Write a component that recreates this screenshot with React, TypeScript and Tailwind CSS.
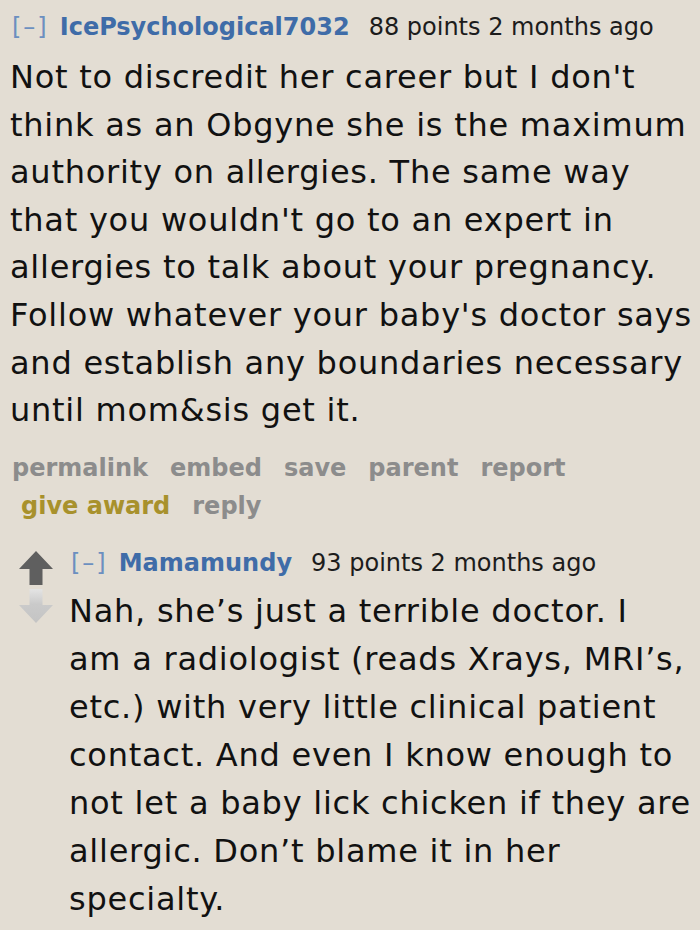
import React from 'react';

const firstBody = [
  "Not to discredit her career but I don't",
  'think as an Obgyne she is the maximum',
  'authority on allergies. The same way',
  "that you wouldn't go to an expert in",
  'allergies to talk about your pregnancy.',
  "Follow whatever your baby's doctor says",
  'and establish any boundaries necessary',
  'until mom&sis get it.',
];

const secondBody = [
  'Nah, she\u2019s just a terrible doctor. I',
  'am a radiologist (reads Xrays, MRI\u2019s,',
  'etc.) with very little clinical patient',
  'contact. And even I know enough to',
  'not let a baby lick chicken if they are',
  'allergic. Don\u2019t blame it in her',
  'specialty.',
];

const sans = "font-['DejaVu_Sans','Verdana',sans-serif]";

const Tagline = ({ user, points }: { user: string; points: number }) => (
  <div className={`flex items-baseline whitespace-nowrap text-[24px] leading-[32px] ${sans}`}>
    <span className="tracking-[2px] text-[#6c8fc0]">[–]</span>
    <span className="ml-[11px] font-bold text-[#3f6ca8]">{user}</span>
    <span className="ml-[19px] text-[#1c1c1c]">{points} points 2 months ago</span>
  </div>
);

const UpArrow = () => (
  <svg width="36" height="34" viewBox="0 0 36 34">
    <path d="M18 0 L35 18 L24.5 18 L24.5 34 L11.5 34 L11.5 18 L1 18 Z" fill="#5f5f5f" />
  </svg>
);

const DownArrow = () => (
  <svg width="36" height="34" viewBox="0 0 36 34">
    <defs>
      <linearGradient id="dn" x1="0" y1="0" x2="0" y2="1">
        <stop offset="0" stopColor="#e4e4e4" />
        <stop offset="0.45" stopColor="#cacaca" />
        <stop offset="1" stopColor="#c4c4c4" />
      </linearGradient>
    </defs>
    <path d="M18 34 L35 16 L24.5 16 L24.5 0 L11.5 0 L11.5 16 L1 16 Z" fill="url(#dn)" />
  </svg>
);

export default function App() {
  return (
    <div className="h-[930px] w-[700px] overflow-hidden bg-[#e3ddd3] text-[#111]">
      <div className="pl-[12px] pt-[11px]">
        <Tagline user="IcePsychological7032" points={88} />
        <div className={`mt-[11px] -ml-[2px] whitespace-nowrap text-[32px] leading-[47.6px] tracking-[0.75px] ${sans}`}>
          {firstBody.map(line => (
            <div key={line}>{line}</div>
          ))}
        </div>
        <div className={`mt-[14px] text-[24px] font-bold leading-[38px] text-[#8c8c8c] ${sans}`}>
          <div className="flex gap-[22px]">
            <span>permalink</span>
            <span>embed</span>
            <span>save</span>
            <span>parent</span>
            <span>report</span>
          </div>
          <div className="ml-[9px] flex gap-[22px]">
            <span className="text-[#a8912c]">give award</span>
            <span>reply</span>
          </div>
        </div>
      </div>

      <div className="mt-[22px] flex">
        <div className="ml-[18px] flex w-[54px] flex-col gap-[4px] pt-[4px]">
          <UpArrow />
          <DownArrow />
        </div>
        <div className="-ml-[1px]">
          <Tagline user="Mamamundy" points={93} />
          <div className={`mt-[8px] -ml-[2px] whitespace-nowrap text-[32px] leading-[48px] tracking-[0.75px] ${sans}`}>
            {secondBody.map(line => (
              <div key={line}>{line}</div>
            ))}
          </div>
        </div>
      </div>
    </div>
  );
}
